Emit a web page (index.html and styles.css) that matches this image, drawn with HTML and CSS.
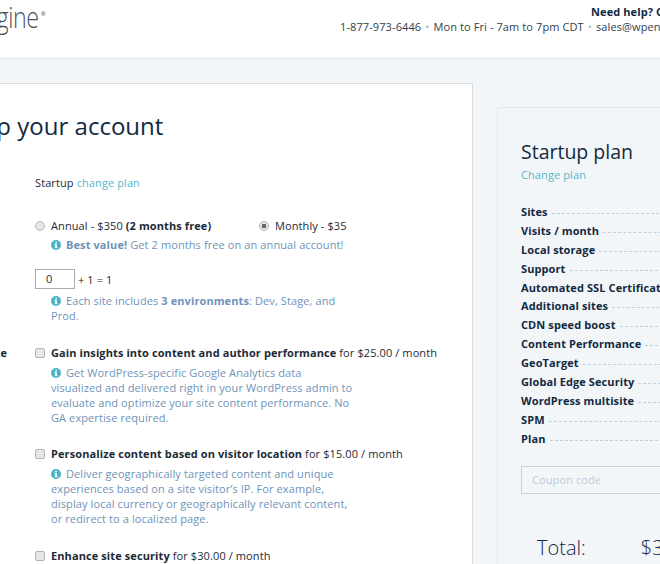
FILE: index.html
```html
<!DOCTYPE html>
<html>
<head>
<meta charset="utf-8">
<link rel="stylesheet" href="styles.css">
</head>
<body>
<header class="top">
  <div class="logo"><span class="logo-word">gine</span><span class="logo-reg">®</span></div>
  <div class="help">
    <div class="help-title">Need help? Chat with us</div>
    <div class="help-line">1-877-973-6446<span class="dot">•</span>Mon to Fri - 7am to 7pm CDT<span class="dot">•</span>sales@wpengine.com</div>
  </div>
</header>
<main class="page">
  <section class="card">
    <h1 class="title">Set up your account</h1>
    <div class="row plan-row"><span class="row-label"></span><div class="row-body">Startup <a class="link">change plan</a></div></div>
    <div class="row billing-row"><span class="row-label"></span>
      <div class="row-body">
        <div class="radios">
          <label class="radio-item annual"><span class="radio"></span><span>Annual - $350 <b>(2 months free)</b></span></label>
          <label class="radio-item"><span class="radio on"></span><span>Monthly - $35</span></label>
        </div>
        <p class="note one"><svg class="info" viewBox="0 0 10 10"><circle cx="5" cy="5" r="5"/><rect x="4.2" y="1.8" width="1.7" height="1.5"/><path d="M3.5 4.1h2.4v3.2h.7v.9H3.5v-.9h.7V5h-.7z"/></svg><b>Best value!</b> Get 2 months free on an annual account!</p>
      </div>
    </div>
    <div class="row sites-row"><span class="row-label"></span>
      <div class="row-body">
        <div class="sites"><span class="num">0</span><span>+ 1 = 1</span></div>
        <p class="note two"><svg class="info" viewBox="0 0 10 10"><circle cx="5" cy="5" r="5"/><rect x="4.2" y="1.8" width="1.7" height="1.5"/><path d="M3.5 4.1h2.4v3.2h.7v.9H3.5v-.9h.7V5h-.7z"/></svg>Each site includes <b>3 environments</b>: Dev, Stage, and Prod.</p>
      </div>
    </div>
    <div class="row addon first"><span class="row-label">Add-ons to optimize your site</span>
      <div class="row-body">
        <label class="check"><span class="box"></span><span><b>Gain insights into content and author performance</b> for $25.00 / month</span></label>
        <p class="note"><svg class="info" viewBox="0 0 10 10"><circle cx="5" cy="5" r="5"/><rect x="4.2" y="1.8" width="1.7" height="1.5"/><path d="M3.5 4.1h2.4v3.2h.7v.9H3.5v-.9h.7V5h-.7z"/></svg>Get WordPress-specific Google Analytics data visualized and delivered right in your WordPress admin to evaluate and optimize your site content performance. No GA expertise required.</p>
      </div>
    </div>
    <div class="row addon"><span class="row-label"></span>
      <div class="row-body">
        <label class="check"><span class="box"></span><span><b>Personalize content based on visitor location</b> for $15.00 / month</span></label>
        <p class="note"><svg class="info" viewBox="0 0 10 10"><circle cx="5" cy="5" r="5"/><rect x="4.2" y="1.8" width="1.7" height="1.5"/><path d="M3.5 4.1h2.4v3.2h.7v.9H3.5v-.9h.7V5h-.7z"/></svg>Deliver geographically targeted content and unique experiences based on a site visitor’s IP. For example, display local currency or geographically relevant content, or redirect to a localized page.</p>
      </div>
    </div>
    <div class="row addon last"><span class="row-label"></span>
      <div class="row-body">
        <label class="check"><span class="box"></span><span><b>Enhance site security</b> for $30.00 / month</span></label>
      </div>
    </div>
  </section>
  <aside class="summary">
    <h2 class="plan-name">Startup plan</h2>
    <a class="link change">Change plan</a>
    <ul class="specs">
      <li><b>Sites</b><i></i></li>
      <li><b>Visits / month</b><i></i></li>
      <li><b>Local storage</b><i></i></li>
      <li><b>Support</b><i></i></li>
      <li><b>Automated SSL Certificates</b><i></i></li>
      <li><b>Additional sites</b><i></i></li>
      <li><b>CDN speed boost</b><i></i></li>
      <li><b>Content Performance</b><i></i></li>
      <li><b>GeoTarget</b><i></i></li>
      <li><b>Global Edge Security</b><i></i></li>
      <li><b>WordPress multisite</b><i></i></li>
      <li><b>SPM</b><i></i></li>
      <li><b>Plan</b><i></i></li>
    </ul>
    <div class="coupon">Coupon code</div>
    <div class="total"><span>Total:</span><span class="amount">$35.00</span></div>
  </aside>
</main>
</body>
</html>
```
FILE: styles.css
```css
* { box-sizing: border-box; }
html, body { margin: 0; padding: 0; height: 564px; overflow: hidden; }
body {
  width: 660px;
  background: #f3f6f9;
  font-family: "Open Sans", sans-serif;
  font-size: 11px;
  letter-spacing: 0.1px;
  line-height: 15px;
  color: #1c2a36;
}
.top {
  height: 59px;
  background: #fff;
  border-bottom: 1px solid #e2e8f0;
  display: flex;
  justify-content: space-between;
  width: 660px;
  overflow: hidden;
}
.logo { margin-left: -14px; display: flex; align-items: flex-start; }
.logo-word { font-size: 29px; font-weight: 300; line-height: 34px; color: #48535c; letter-spacing: -0.5px; transform: scaleX(0.8); transform-origin: right; }
.logo-reg { font-size: 6px; line-height: 8px; margin: 10px 0 0 2px; color: #48535c; }
.help { flex: none; width: 360px; margin-right: -40px; white-space: nowrap; }
.help-title { font-weight: 700; padding: 4px 0 0 251px; color: #12293f; }
.help-line { color: #2f3f4d; }
.dot { color: #a9bccb; margin: 0 4px; }
.page { display: flex; width: 760px; margin-left: -100px; align-items: flex-start; padding-top: 24px; }
.card { flex: none; width: 573px; background: #fff; border: 1px solid #ddd; height: 520px; padding-left: 39px; }
.title { margin: 26px 0 0; font-size: 24px; line-height: 32px; font-weight: 400; letter-spacing: 0.02px; color: #12293f; white-space: nowrap; }
.row { display: flex; margin-left: -4px; }
.row-label { width: 99px; flex: none; font-weight: 700; white-space: nowrap; text-align: right; padding-right: 28px; direction: rtl; }
.row-body { width: 340px; flex: none; }
.plan-row { margin-top: 33px; }
.link { color: #52b8c6; }
.billing-row { margin-top: 28px; }
.radios { display: flex; }
.radio-item { display: flex; align-items: center; white-space: nowrap; }
.annual { width: 224px; }
.radio { width: 10px; height: 10px; border-radius: 50%; background: #e6e6e6; border: 1px solid #b5b5b5; margin-right: 6px; flex: none; }
.radio.on { background: radial-gradient(circle, #666 0 2px, #e6e6e6 2.6px); }
.note { margin: 4px 0 0 16px; color: #6f93b8; line-height: 15px; width: 303px; }
.info { width: 10px; height: 10px; margin-right: 5px; vertical-align: -1px; fill: #fff; }
.info circle { fill: #45b4c5; }
.sites { display: flex; align-items: center; gap: 3px; margin-top: 17px; }
.num { width: 40px; height: 20px; border: 1px solid #aaa; padding-left: 10px; line-height: 18px; background: #fff; }
.note.two { margin-top: 4px; }
.addon { margin-top: 21px; }
.addon.first { margin-top: 22px; }
.addon.last { margin-top: 22px; }
.check { display: flex; white-space: nowrap; align-items: center; }
.box { width: 10px; height: 10px; border: 1px solid #b5b5b5; border-radius: 2px; background: #e6e6e6; margin-right: 6px; flex: none; }
.check + .note { margin-top: 5px; }
.summary { flex: none; margin-left: 24px; width: 300px; margin-top: 24px; border: 1px solid #e5eaef; padding: 30px 23px; height: 520px; }
.plan-name { margin: 0; font-size: 19.5px; line-height: 28px; font-weight: 400; letter-spacing: 0; color: #12293f; white-space: nowrap; }
.change { display: block; margin-top: 1px; }
.specs { list-style: none; margin: 20px 0 0; padding: 0; }
.specs li { display: flex; height: 18.9px; line-height: 19px; align-items: center; white-space: nowrap; color: #12293f; }
.specs i { flex: 1; border-bottom: 1px dashed #bcd0e4; margin-left: 4px; margin-top: 4px; }
.coupon { width: 220px; height: 28px; margin-top: 18px; border: 1px solid #cdd2d6; padding: 5px 10px; color: #b9cbe0; }
.total { display: flex; font-size: 20px; font-weight: 300; letter-spacing: 0; line-height: 26px; margin-top: 41px; padding-left: 16px; color: #12293f; }
.amount { margin-left: 55px; }
```
